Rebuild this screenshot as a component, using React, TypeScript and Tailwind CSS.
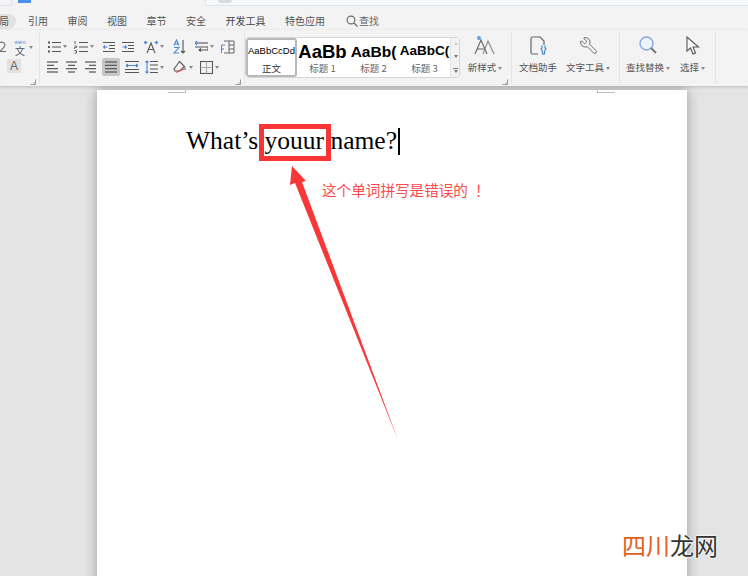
import { Wrench } from 'lucide-react';

const cn = { fontFamily: '"Noto Sans CJK SC", "Noto Sans", sans-serif' };

function Caret() {
  return <span className="ml-[2px] w-0 h-0 border-x-[2.5px] border-x-transparent border-t-[3px] border-t-[#888]" />;
}

function Lines({ rows }: { rows: [number, number][] }) {
  return (
    <svg width="14" height="14" viewBox="0 0 14 14" fill="none" stroke="#555" strokeWidth="1.2">
      {rows.map(([a, b], i) => (
        <path key={i} d={`M${a} ${2 + i * (10 / (rows.length - 1))}H${b}`} />
      ))}
    </svg>
  );
}

function ListIcon({ numbered }: { numbered?: boolean }) {
  return (
    <svg width="14" height="14" viewBox="0 0 14 14" fill="none" stroke="#555" strokeWidth="1.2">
      <path d="M5 2.500H14M5 7H14M5 11.500H14" />
      {numbered ? (
        <path d="M1 1V4M0.500 6H2.500V7.500H0.500V9M0.500 10.500H2.500V13H0.500" strokeWidth="0.9" />
      ) : (
        <path d="M1 2.500H3M1 7H3M1 11.500H3" strokeWidth="2" />
      )}
    </svg>
  );
}

function IndentIcon({ flip }: { flip?: boolean }) {
  return (
    <svg width="12" height="12" viewBox="0 0 12 12" fill="none" stroke="#555" strokeWidth="1.1">
      <path d="M0 1.500H12M6 4.500H12M6 7.500H12M0 10.500H12" />
      <path d={flip ? 'M0.500 6H4.500M3 4.500L4.500 6L3 7.500' : 'M4.500 6H0.500M2 4.500L0.500 6L2 7.500'} stroke="#4a86d8" />
    </svg>
  );
}

function Btn({ children, caret, className = '' }: { children: React.ReactNode; caret?: boolean; className?: string }) {
  return (
    <div className={`flex items-center justify-start ${className}`}>
      {children}
      {caret && <Caret />}
    </div>
  );
}

function Launcher() {
  return (
    <svg className="absolute right-[3px] bottom-[1px]" width="6" height="6" viewBox="0 0 6 6" fill="none" stroke="#999">
      <path d="M0.500 5.500H5.500V0.500" />
      <path d="M3 3L5 5" strokeWidth="0.7" />
    </svg>
  );
}

function Divider() {
  return <div className="w-px h-[52px] bg-[#e4e4e4] shrink-0" />;
}

function Tool({ icon, label, caret, width }: { icon: React.ReactNode; label: string; caret?: boolean; width: string }) {
  return (
    <div className={`flex flex-col items-center shrink-0 ${width}`}>
      <div className="h-[26px] flex items-end justify-center pb-[3px]">{icon}</div>
      <div className="h-[20px] flex items-center text-[9.5px] text-[#555] leading-none whitespace-nowrap" style={cn}>
        {label}
        {caret && <Caret />}
      </div>
    </div>
  );
}

function StyleItem({ sample, label, cls, selected }: { sample: string; label: string; cls: string; selected?: boolean }) {
  return (
    <div className={`w-[51px] h-full shrink-0 flex flex-col items-center ${selected ? 'border-2 border-[#b9b9b9] rounded-[3px] bg-white' : 'pt-[2px] bg-white'}`}>
      <div className={`w-full h-[23px] overflow-hidden flex items-center justify-center whitespace-nowrap text-black font-['Liberation_Sans',sans-serif] ${cls}`}>{sample}</div>
      <div className={`text-[9.5px] leading-none mt-[1px] whitespace-nowrap ${selected ? 'text-[#333]' : 'text-[#666]'}`} style={cn}>{label}</div>
    </div>
  );
}

const menus = ['引用', '审阅', '视图', '章节', '安全', '开发工具', '特色应用'];

export default function App() {
  return (
    <div className="relative w-[748px] h-[576px] overflow-hidden bg-[#e4e4e4] flex flex-col" style={cn}>
      {/* window tab strip, mostly cut off */}
      <div className="h-[6px] shrink-0 flex bg-[#f3f3f3]">
        <div className="w-[12px] bg-[#f3f5fa] border-r border-b border-[#dfe3ee]" />
        <div className="w-[193px] pl-[6px]">
          <div className="w-[13px] h-[3px] bg-[#4a90e8]" />
        </div>
        <div className="flex-1 bg-[#f6f7fb] border-l border-b border-[#dfe3ee] pl-[12px]">
          <div className="w-[14px] h-[3px] bg-[#dcdcdc] rounded-b-full" />
        </div>
      </div>

      {/* menu row */}
      <div className="h-[24px] shrink-0 bg-[#f3f3f3] flex items-center pt-[6px] text-[10px] text-[#555] leading-none">
        <div className="w-[16px] h-[15px] rounded-r-full bg-[#e2e2e2] flex items-center justify-end pr-[7px] mr-[12px] overflow-hidden">局</div>
        <div className="flex gap-[19.5px]">
          {menus.map(m => (
            <span key={m} className={m === '开发工具' ? 'text-[#444]' : ''}>{m}</span>
          ))}
        </div>
        <div className="flex items-center ml-[21px] text-[#666]">
          <svg width="12" height="12" viewBox="0 0 12 12" fill="none" stroke="#666" strokeWidth="1.1">
            <circle cx="5" cy="5" r="3.900" />
            <path d="M8 8L11.500 11.500" />
          </svg>
          <span className="ml-[1px]">查找</span>
        </div>
      </div>

      {/* ribbon */}
      <div className="relative z-10 h-[56px] shrink-0 bg-[#f3f3f3] flex items-center shadow-[0_1px_3px_rgba(0,0,0,0.18)]">
        {/* font group, cut off on the left */}
        <div className="relative w-[39px] h-full shrink-0 overflow-hidden">
          <div className="absolute left-0 top-[8px] w-full h-[18px] flex items-center">
            <svg className="mr-[7px]" width="6" height="12" viewBox="0 0 6 12" fill="none" stroke="#666" strokeWidth="1.1">
              <path d="M0 1.500C3 0.500 5 2 5 4C5 6 2 8 0 10.500H6" />
            </svg>
            <div className="flex flex-col items-center w-[14px]">
              <span className="text-[6px] leading-[7px] text-[#4a86d8] font-['Liberation_Sans',sans-serif]">wén</span>
              <span className="text-[10px] leading-[10px] text-[#555]">文</span>
            </div>
            <Caret />
          </div>
          <div className="absolute left-[7px] top-[29px] w-[14px] h-[14px] bg-[#e2e2e2] flex items-center justify-center text-[12px] leading-none text-[#666] font-['Liberation_Sans',sans-serif]">A</div>
          <Launcher />
        </div>
        <Divider />

        {/* paragraph group */}
        <div className="relative w-[204px] h-full shrink-0 pl-[7px] pt-[8px] flex flex-col gap-[3px]">
          <div className="h-[17px] flex items-center">
            <Btn caret className="w-[27px]"><ListIcon /></Btn>
            <Btn caret className="w-[29px]"><ListIcon numbered /></Btn>
            <Btn className="w-[19px]"><IndentIcon /></Btn>
            <Btn className="w-[22px]"><IndentIcon flip /></Btn>
            <Btn caret className="w-[29px]">
              <svg width="14" height="14" viewBox="0 0 14 14" fill="none" strokeWidth="1.1">
                <path d="M3 13L7 3L11 13M4.500 9.500H9.500" stroke="#555" />
                <path d="M0.500 2.500H3.500M10.500 2.500H13.500M2 1L0.500 2.500L2 4M12 1L13.500 2.500L12 4" stroke="#4a86d8" />
              </svg>
            </Btn>
            <Btn className="w-[22px]">
              <svg width="13" height="15" viewBox="0 0 13 15" fill="none" strokeWidth="1.100">
                <path d="M1 6.500L3.500 1L6 6.500M2 5H5" stroke="#4a86d8" />
                <path d="M1 8.500H6L1 14H6" stroke="#4a86d8" />
                <path d="M10 1V14M8 12L10 14L12 12" stroke="#555" />
              </svg>
            </Btn>
            <Btn caret className="w-[26px]">
              <svg width="13" height="13" viewBox="0 0 13 13" fill="none" strokeWidth="1.100">
                <path d="M0 3H13" stroke="#555" />
                <path d="M2 1L0 3L2 5" stroke="#4a86d8" />
                <path d="M0 7H13M13 7V10H4M6 8.500L4 10L6 11.500" stroke="#555" />
              </svg>
            </Btn>
            <svg width="14" height="14" viewBox="0 0 14 14" fill="none" stroke="#666" strokeWidth="1">
              <path d="M3 1H13V13H3M8 1V13M8 5H13M8 9H13" />
              <path d="M0.500 5V13M0.500 5H4M0.500 9H3" stroke="#4a86d8" />
            </svg>
          </div>
          <div className="h-[18px] flex items-center">
            <div className="w-[19px]"><Lines rows={[[0, 11], [0, 7], [0, 11], [0, 11]]} /></div>
            <div className="w-[19px]"><Lines rows={[[0, 11], [2, 9], [0, 11], [2, 9]]} /></div>
            <div className="w-[17px]"><Lines rows={[[0, 11], [4, 11], [0, 11], [4, 11]]} /></div>
            <div className="w-[18px] h-[18px] rounded-[2px] bg-[#c6c6c6] flex items-center justify-center">
              <Lines rows={[[1, 13], [1, 13], [1, 13], [1, 13]]} />
            </div>
            <div className="w-[5px]" />
            <Btn className="w-[20px]">
              <svg width="14" height="14" viewBox="0 0 14 14" fill="none" strokeWidth="1.100">
                <path d="M0 1.500H14M0 12.500H14M0 9.500H14" stroke="#555" />
                <path d="M1 5.500H13M1 5.500L3 4M1 5.500L3 7M13 5.500L11 4M13 5.500L11 7" stroke="#4a86d8" />
              </svg>
            </Btn>
            <Btn caret className="w-[28px]">
              <svg width="13" height="14" viewBox="0 0 13 14" fill="none" strokeWidth="1.100">
                <path d="M5 1.500H13M5 5H13M5 9H13M5 12.500H13" stroke="#555" />
                <path d="M2 1V13M0.500 2.500L2 1L3.500 2.500M0.500 11.500L2 13L3.500 11.500" stroke="#4a86d8" />
              </svg>
            </Btn>
            <Btn caret className="w-[27px]">
              <svg width="14" height="14" viewBox="0 0 14 14" fill="none" stroke="#555" strokeWidth="1.100">
                <path d="M6.500 1.500L11.500 6.500L6.500 11H2L1 9L6.500 1.500Z" />
                <path d="M3 12.500L11 9" stroke="#d9534f" />
                <path d="M12 7.500V10" />
              </svg>
            </Btn>
            <Btn caret>
              <svg width="13" height="13" viewBox="0 0 13 13" fill="none" stroke="#555" strokeWidth="1.100">
                <rect x="0.500" y="0.500" width="12" height="12" />
                <path d="M6.500 0.500V12.500M0.500 6.500H12.500" stroke="#aaa" />
              </svg>
            </Btn>
          </div>
          <Launcher />
        </div>
        <Divider />

        {/* style gallery */}
        <div className="relative w-[266px] h-full shrink-0 flex">
          <div className="mt-[7px] w-[215px] h-[41px] border border-[#d6d6d6] rounded-[4px] bg-white flex overflow-hidden">
            <StyleItem selected sample="AaBbCcDd" label="正文" cls="text-[9.5px]" />
            <StyleItem sample="AaBb" label="标题 1" cls="text-[18.5px] font-bold" />
            <StyleItem sample="AaBb(" label="标题 2" cls="text-[15.5px] font-bold" />
            <StyleItem sample="AaBbC(" label="标题 3" cls="text-[13.5px] font-bold" />
            <div className="ml-auto w-[10px] shrink-0 bg-[#f3f3f3] border-l border-[#e4e4e4] flex flex-col items-center justify-between py-[4px]">
              <span className="w-0 h-0 border-x-[2.5px] border-x-transparent border-b-[3px] border-b-[#ccc]" />
              <span className="w-0 h-0 border-x-[2.5px] border-x-transparent border-t-[3px] border-t-[#777]" />
              <span className="w-[5px] h-[5px] border-t border-[#777] flex justify-center"><span className="w-0 h-0 mt-[1px] border-x-[2.5px] border-x-transparent border-t-[3px] border-t-[#777]" /></span>
            </div>
          </div>
          <div className="ml-[3px] mt-[2px]">
            <Tool width="w-[44px]" label="新样式" caret icon={
              <svg width="22" height="20" viewBox="0 0 22 20" fill="none" strokeWidth="1.100">
                <path d="M1 19L7 5L13 19M3 14H11" stroke="#666" />
                <path d="M9 19L14 6L20 19" stroke="#888" />
                <path d="M5 1V5M3 3H7M3.500 1.500L6.500 4.500M6.500 1.500L3.500 4.500" stroke="#6aa0e6" />
              </svg>
            } />
          </div>
          <Launcher />
        </div>
        <Divider />

        {/* helpers */}
        <div className="w-[107px] h-full shrink-0 flex pt-[2px]">
          <Tool width="w-[52px]" label="文档助手" icon={
            <svg width="17" height="19" viewBox="0 0 17 19" fill="none" strokeWidth="1.200">
              <path d="M8 18H2.500C1.500 18 1 17.500 1 16.500V2.500C1 1.500 1.500 1 2.500 1H10L14 5V9" stroke="#666" />
              <path d="M12 9.500V12.500M15 9.500V12.500M11 12C11 14 12.500 14.500 12.500 15.500V18H14.500V15.500C14.500 14.500 16 14 16 12" stroke="#4a86d8" />
            </svg>
          } />
          <Tool width="w-[48px]" label="文字工具" caret icon={
            <Wrench size={19} strokeWidth={1.2} color="#666" className="-scale-x-100" />
          } />
        </div>
        <Divider />

        {/* find group */}
        <div className="w-[95px] h-full shrink-0 flex pt-[2px]">
          <Tool width="w-[56px]" label="查找替换" caret icon={
            <svg width="18" height="19" viewBox="0 0 18 19" fill="none">
              <circle cx="7.500" cy="7.500" r="6.500" fill="#eef3fb" stroke="#86a8de" strokeWidth="1.400" />
              <path d="M12 12L17 17" stroke="#777" strokeWidth="2" />
            </svg>
          } />
          <Tool width="w-[33px]" label="选择" caret icon={
            <svg width="14" height="19" viewBox="0 0 14 19" fill="none" stroke="#555" strokeWidth="1.100">
              <path d="M1 1V15L4.500 12L7 18L9.500 17L7 11L12.500 11L1 1Z" fill="#fafafa" />
            </svg>
          } />
        </div>
        <Divider />
      </div>

      {/* document canvas */}
      <div className="flex-1 min-h-0 pt-[4px] pl-[97px]">
        <div className="relative w-[590px] h-[600px] bg-white shadow-[0_0_12px_rgba(0,0,0,0.32)] pl-[89px] pt-[36px]">
          <div className="absolute left-[71px] top-0 w-[18px] h-[3px] border-r border-b border-[#bbb]" />
          <div className="absolute left-[500px] top-0 w-[18px] h-[3px] border-l border-b border-[#bbb]" />
          <div className="flex items-center text-[25.5px] leading-[30px] text-black font-['Liberation_Serif',serif]">
            What’s youur name?
            <span className="w-[1.5px] h-[27px] bg-black ml-[1px]" />
          </div>
        </div>
      </div>

      {/* red annotations over the page */}
      <div className="absolute left-[259px] top-[124px] w-[72px] h-[37px] border-[5px] border-[#f83434]" />
      <svg className="absolute left-0 top-0 pointer-events-none" width="748" height="576" viewBox="0 0 748 576">
        <path d="M398 440L302 182L306 181L292 166L290 185L295 183Z" fill="#f83838" />
      </svg>
      <div className="absolute left-[322px] top-[180px] text-[14.6px] leading-[20px] text-[#fb4a4e] whitespace-nowrap">
        这个单词拼写是错误的<span className="ml-[7px]">！</span>
      </div>

      {/* site watermark */}
      <div className="absolute left-[622px] top-[530px] flex text-[24px] leading-[30px] [text-shadow:0_0_2px_#fff,0_0_2px_#fff,0_0_2px_#fff]">
        <span className="text-[#e2601d]">四川</span>
        <span className="text-[#333]">龙网</span>
      </div>
    </div>
  );
}
